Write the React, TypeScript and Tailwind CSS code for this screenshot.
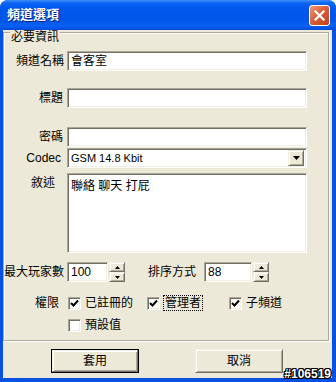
import type { ReactNode } from "react";

const sunken =
  "border border-t-[#aca899] border-l-[#aca899] border-r-white border-b-white shadow-[inset_1px_1px_0_#716f64,inset_-1px_-1px_0_#f1efe2] bg-white";
const raised =
  "border border-t-[#f1efe2] border-l-[#f1efe2] border-r-[#716f64] border-b-[#716f64] shadow-[inset_1px_1px_0_#fff,inset_-1px_-1px_0_#aca899] bg-[#ece9d8]";

function Label({ children, className = "" }: { children: ReactNode; className?: string }) {
  return <div className={`w-[60px] shrink-0 text-right text-[12px] leading-[12px] ${className}`}>{children}</div>;
}

function Check({ checked }: { checked?: boolean }) {
  return (
    <span className={`flex h-[13px] w-[13px] shrink-0 items-center justify-center ${sunken}`}>
      {checked && (
        <svg width="9" height="9" viewBox="0 0 9 9">
          <path d="M1 4 L3.5 6.5 L8 1.5" fill="none" stroke="#000" strokeWidth="2" />
        </svg>
      )}
    </span>
  );
}

function Spinner() {
  const btn = `flex h-[10px] w-[16px] items-center justify-center ${raised}`;
  return (
    <div className="ml-[1px] flex flex-col">
      <span className={btn}>
        <svg width="5" height="3" viewBox="0 0 5 3"><path d="M2.5 0 L5 3 L0 3 Z" fill="#000" /></svg>
      </span>
      <span className={btn}>
        <svg width="5" height="3" viewBox="0 0 5 3"><path d="M0 0 L5 0 L2.5 3 Z" fill="#000" /></svg>
      </span>
    </div>
  );
}

export default function App() {
  return (
    <div className="relative flex h-[382px] w-[336px] flex-col overflow-hidden rounded-t-[8px] bg-[#0650e2] font-['Liberation_Sans','Noto_Sans_CJK_TC',sans-serif] text-black">
      {/* title bar */}
      <div className="flex h-[30px] shrink-0 items-center justify-between bg-[linear-gradient(to_bottom,#3d8ff7_0px,#0b66f2_3px,#0058ee_8px,#0055e6_20px,#0760f2_26px,#0449da_30px)] pl-[7px] pr-[6px]">
        <span className="text-[13px] font-bold leading-[14px] text-white [text-shadow:1px_1px_0_#0b2480]">頻道選項</span>
        <span className="flex h-[21px] w-[21px] items-center justify-center rounded-[3px] border border-white bg-[linear-gradient(135deg,#ec9a7a_0%,#d9603a_45%,#c1401a_100%)]">
          <svg width="11" height="11" viewBox="0 0 11 11">
            <path d="M1.5 1.5 L9.5 9.5 M9.5 1.5 L1.5 9.5" stroke="#fff" strokeWidth="2.2" strokeLinecap="square" />
          </svg>
        </span>
      </div>

      {/* client */}
      <div className="mb-[4px] ml-[3px] mr-[4px] flex flex-1 flex-col bg-[#ece9d8]">
        <div className="relative mt-[2px] h-[309px] w-[326px] border border-[#aca899] pt-[18px] shadow-[inset_1px_1px_0_#fff,1px_1px_0_#fff]">
          <span className="absolute left-[6px] top-[-2px] bg-[#ece9d8] px-[1px] text-[12px] leading-[12px]">必要資訊</span>

          <div className="flex h-[20px] items-center">
            <Label>頻道名稱</Label>
            <div className={`ml-[3px] flex h-[20px] w-[240px] items-center pl-[3px] text-[12px] leading-[12px] ${sunken}`}>會客室</div>
          </div>

          <div className="mt-[17px] flex h-[20px] items-center">
            <Label className="pr-[1px]">標題</Label>
            <div className={`ml-[3px] h-[20px] w-[240px] ${sunken}`} />
          </div>

          <div className="mt-[19px] flex h-[20px] items-center">
            <Label className="pr-[1px]">密碼</Label>
            <div className={`ml-[3px] h-[20px] w-[240px] ${sunken}`} />
          </div>

          <div className="mt-[1px] flex h-[20px] items-center">
            <Label className="pr-[3px] text-[11px]">Codec</Label>
            <div className={`ml-[3px] flex h-[20px] w-[240px] items-center justify-between pl-[3px] pr-[2px] ${sunken}`}>
              <span className="text-[11px] leading-[12px]">GSM 14.8 Kbit</span>
              <span className={`flex h-[16px] w-[16px] items-center justify-center ${raised}`}>
                <svg width="7" height="4" viewBox="0 0 7 4"><path d="M0 0 L7 0 L3.5 4 Z" fill="#000" /></svg>
              </span>
            </div>
          </div>

          <div className="mt-[5px] flex items-start">
            <Label className="pr-[9px] pt-[4px]">敘述</Label>
            <div className={`ml-[3px] h-[80px] w-[240px] pl-[3px] pt-[6px] text-[12px] leading-[12px] ${sunken}`}>聯絡 聊天 打屁</div>
          </div>

          <div className="mt-[9px] flex h-[20px] items-center">
            <Label>最大玩家數</Label>
            <div className={`ml-[3px] flex h-[20px] w-[41px] items-center pl-[3px] text-[12px] leading-[12px] ${sunken}`}>100</div>
            <Spinner />
            <span className="ml-[23px] text-[12px] leading-[12px]">排序方式</span>
            <div className={`ml-[8px] flex h-[20px] w-[48px] items-center pl-[3px] text-[12px] leading-[12px] ${sunken}`}>88</div>
            <Spinner />
          </div>

          <div className="mt-[13px] flex h-[16px] items-center text-[12px] leading-[12px]">
            <Label className="pr-[5px]">權限</Label>
            <span className="ml-[4px]"><Check checked /></span>
            <span className="ml-[4px]">已註冊的</span>
            <span className="ml-[14px]"><Check checked /></span>
            <span className="ml-[3px] flex h-[16px] items-center border border-dotted border-black px-[1px]">管理者</span>
            <span className="ml-[26px]"><Check checked /></span>
            <span className="ml-[4px]">子頻道</span>
          </div>

          <div className="mt-[6px] flex h-[16px] items-center text-[12px] leading-[12px]">
            <span className="ml-[64px]"><Check /></span>
            <span className="ml-[4px]">預設值</span>
          </div>
        </div>

        <div className="mt-[8px] flex gap-[56px] pl-[48px]">
          <button className="h-[24px] w-[88px] border border-black">
            <span className={`flex h-full w-full items-center justify-center text-[12px] leading-[12px] ${raised}`}>套用</span>
          </button>
          <button className={`flex h-[24px] w-[88px] items-center justify-center text-[12px] leading-[12px] ${raised}`}>取消</button>
        </div>
      </div>

      <span className="absolute bottom-[1px] right-[5px] text-[12px] font-bold leading-[13px] text-white [text-shadow:1px_0_0_#000,-1px_0_0_#000,0_1px_0_#000,0_-1px_0_#000,1px_1px_0_#000,-1px_-1px_0_#000,1px_-1px_0_#000,-1px_1px_0_#000]">
        #106519
      </span>
    </div>
  );
}
